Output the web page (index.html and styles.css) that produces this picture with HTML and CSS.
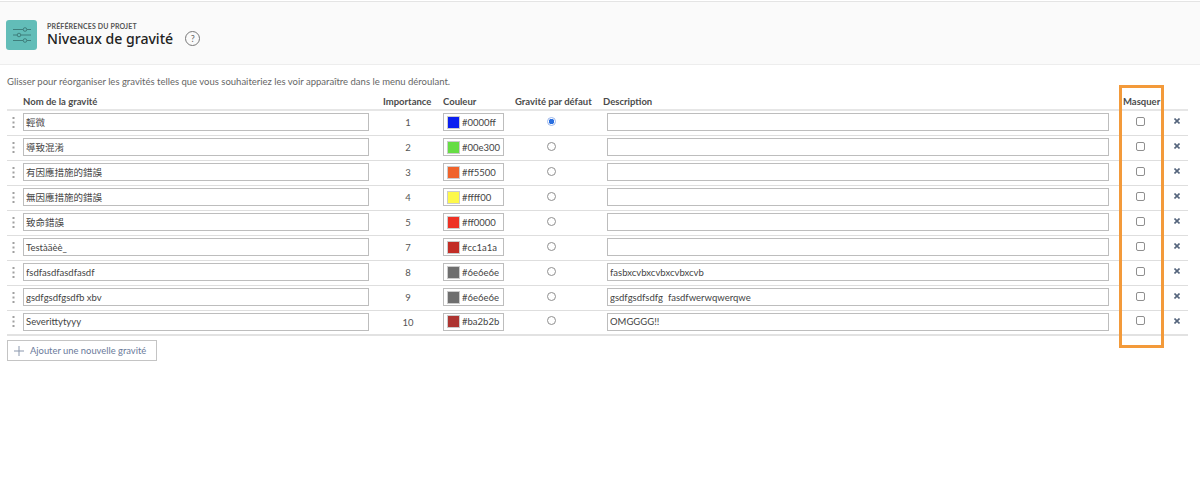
FILE: index.html

```html
<!DOCTYPE html>
<html lang="fr">
<head>
  <meta charset="UTF-8" />
  <meta name="viewport" content="width=device-width, initial-scale=1.0" />
  <title>Niveaux de gravité</title>
  <link rel="stylesheet" href="styles.css">
</head>
<body>
  <header class="entete">
    <div class="entete-icone">
      <svg width="18" height="16" viewBox="0 0 18 16" fill="none" stroke="#3f7f7c" stroke-width="1">
        <path d="M0 2.5h18M0 8h18M0 13.5h18" />
        <circle cx="12" cy="2.5" r="1.8" fill="#62bdb8" />
        <circle cx="6" cy="8" r="1.8" fill="#62bdb8" />
        <circle cx="12" cy="13.5" r="1.8" fill="#62bdb8" />
      </svg>
    </div>
    <div>
      <div class="entete-sur">PRÉFÉRENCES DU PROJET</div>
      <div class="entete-titre">
        <h1>Niveaux de gravité</h1>
        <span class="aide">?</span>
      </div>
    </div>
  </header>

  <main class="contenu">
    <p class="consigne">Glisser pour réorganiser les gravités telles que vous souhaiteriez les voir apparaître dans le menu déroulant.</p>

    <table class="gravites">
      <thead>
        <tr>
          <th class="col-poignee"></th>
          <th class="col-nom">Nom de la gravité</th>
          <th class="col-importance">Importance</th>
          <th class="col-couleur">Couleur</th>
          <th class="col-defaut">Gravité par défaut</th>
          <th class="col-description">Description</th>
          <th class="col-masquer">Masquer</th>
          <th class="col-suppr"></th>
        </tr>
      </thead>
      <tbody id="lignes"></tbody>
    </table>

    <button class="ajouter">
      <svg class="plus" width="10" height="10" viewBox="0 0 10 10" stroke="#8a97ad" stroke-width="1"><path d="M5 0v10M0 5h10" /></svg>
      Ajouter une nouvelle gravité
    </button>
  </main>

  <div class="surlignage"></div>

  <script>
    const gravites = [
      { nom: "輕微", imp: 1, couleur: "#0000ff", apercu: "#0a1ff0", desc: "" },
      { nom: "導致混淆", imp: 2, couleur: "#00e300", apercu: "#66dd44", desc: "" },
      { nom: "有因應措施的錯誤", imp: 3, couleur: "#ff5500", apercu: "#f0632b", desc: "" },
      { nom: "無因應措施的錯誤", imp: 4, couleur: "#ffff00", apercu: "#fdf84a", desc: "" },
      { nom: "致命錯誤", imp: 5, couleur: "#ff0000", apercu: "#ee3124", desc: "" },
      { nom: "Testàäèè_", imp: 7, couleur: "#cc1a1a", apercu: "#c22d26", desc: "" },
      { nom: "fsdfasdfasdfasdf", imp: 8, couleur: "#6e6e6e", apercu: "#6e6e6e", desc: "fasbxcvbxcvbxcvbxcvb" },
      { nom: "gsdfgsdfgsdfb xbv", imp: 9, couleur: "#6e6e6e", apercu: "#6e6e6e", desc: "gsdfgsdfsdfg  fasdfwerwqwerqwe" },
      { nom: "Severittytyyy", imp: 10, couleur: "#ba2b2b", apercu: "#ad3431", desc: "OMGGGG!!" }
    ];

    const lignes = document.getElementById("lignes");
    gravites.forEach((g, i) => {
      const tr = document.createElement("tr");
      tr.innerHTML = `<td><svg class="poignee" width="3" height="11" viewBox="0 0 3 11" fill="#a0a0a0"><rect x="0.5" y="0" width="2" height="2" /><rect x="0.5" y="4.5" width="2" height="2" /><rect x="0.5" y="9" width="2" height="2" /></svg></td>
        <td><input class="champ champ-nom" type="text" value="${g.nom}" /></td>
        <td class="importance">${g.imp}</td>
        <td><div class="couleur"><span class="apercu" style="background: ${g.apercu}"></span>${g.couleur}</div></td>
        <td class="centre"><input class="radio" type="radio" name="defaut" ${i === 0 ? "checked" : ""} /></td>
        <td><input class="champ champ-desc" type="text" value="${g.desc}" /></td>
        <td><input class="case" type="checkbox" /></td>
        <td><svg class="suppr" width="6" height="6" viewBox="0 0 6 6" stroke="#54647c" stroke-width="1.6"><path d="M0.5 0.5l5 5M5.5 0.5l-5 5" /></svg></td>`;
      lignes.appendChild(tr);
    });
  </script>
</body>
</html>
```

FILE: styles.css

```css
* {
  box-sizing: border-box;
}
body {
  margin: 0;
  font-family: Lato, "Noto Sans CJK TC", sans-serif;
  color: #4b4b4b;
  background: #fff;
}
.entete {
  display: flex;
  align-items: center;
  gap: 10px;
  height: 64px;
  margin-top: 1px;
  padding: 3px 0 0 6px;
  background: #fafafa;
  border-top: 1px solid #e4e4e4;
  border-bottom: 1px solid #ededed;
}
.entete-icone {
  display: flex;
  align-items: center;
  justify-content: center;
  width: 31px;
  height: 30px;
  border-radius: 3px;
  background: #62bdb8;
}
.entete-sur {
  font-size: 7px;
  font-weight: 700;
  letter-spacing: 0.15px;
  color: #555;
}
.entete-titre {
  display: flex;
  align-items: center;
  gap: 12px;
  margin-top: -1px;
}
h1 {
  margin: 0;
  font-family: "Noto Sans", sans-serif;
  font-size: 14.1px;
  font-weight: 500;
  color: #222;
}
.aide {
  display: flex;
  align-items: center;
  justify-content: center;
  width: 15px;
  height: 15px;
  border: 1px solid #777;
  border-radius: 50%;
  font-size: 9px;
  color: #666;
}
.contenu {
  padding: 0 12px 0 7px;
}
.consigne {
  margin: 11px 0 0;
  font-size: 9.5px;
  line-height: 12px;
  color: #666;
}
.gravites {
  width: 1181px;
  margin-top: 6px;
  border-collapse: collapse;
  table-layout: fixed;
  font-size: 9.5px;
}
.gravites th {
  height: 16px;
  padding: 0;
  font-weight: 700;
  text-align: left;
  color: #4b4b4b;
  border-bottom: 2px solid #e6e6e6;
}
.gravites td {
  height: 25px;
  padding: 0;
  border-bottom: 1px solid #dedede;
}
.gravites tbody tr:last-child td {
  border-bottom: 2px solid #e2e2e2;
}
.col-poignee { width: 16px; }
.col-nom { width: 346px; }
.gravites .col-importance { width: 74px; padding-left: 14px; }
.col-couleur { width: 61px; }
.gravites .col-defaut { width: 99px; padding-left: 11px; }
.col-description { width: 516px; }
.gravites .col-masquer { width: 53px; padding-left: 4px; }
.col-suppr { width: 16px; }
.poignee {
  display: block;
  margin: -1px 0 0 5px;
}
.champ {
  display: block;
  height: 18px;
  padding: 0 2px;
  margin-top: -1px;
  border: 1px solid #bdbdbd;
  border-radius: 0;
  background: #fff;
  font-family: Lato, "Noto Sans CJK TC", sans-serif;
  font-size: 9.5px;
  color: #444;
  outline: none;
}
.champ-nom {
  width: 346px;
}
.champ-desc {
  width: 502px;
  margin-left: 4px;
}
.gravites .importance {
  padding-left: 4px;
  text-align: center;
  color: #555;
}
.couleur {
  display: flex;
  align-items: center;
  gap: 2px;
  width: 61px;
  height: 18px;
  margin-top: -1px;
  padding-left: 3px;
  border: 1px solid #bdbdbd;
  font-size: 9.5px;
  color: #444;
}
.apercu {
  width: 13px;
  height: 13px;
  border: 1px solid #ccc;
}
.gravites .centre {
  padding-right: 5px;
}
.radio,
.case {
  appearance: none;
  display: block;
  width: 9px;
  height: 9px;
  margin: -3px auto 0;
  border: 1px solid #8f8f8f;
  border-radius: 50%;
  background: #fff;
}
.radio:checked {
  border-color: #9db8ec;
  background: radial-gradient(circle, #2a6fe0 0 2.5px, #fff 3px);
}
.case {
  margin-left: 17px;
  border-radius: 2px;
}
.suppr {
  display: block;
  margin: -3px 0 0 2px;
}
.ajouter {
  display: flex;
  align-items: center;
  width: 150px;
  height: 21px;
  margin-top: 4px;
  padding: 0 0 0 6px;
  background: #fff;
  border: 1px solid #c4c4c4;
  font-family: Lato, sans-serif;
  font-size: 9.4px;
  color: #6a7a9a;
}
.plus {
  margin-right: 6px;
}
.surlignage {
  position: absolute;
  left: 1119px;
  top: 85px;
  width: 45px;
  height: 263px;
  border: 3px solid #f39a3a;
}
```
